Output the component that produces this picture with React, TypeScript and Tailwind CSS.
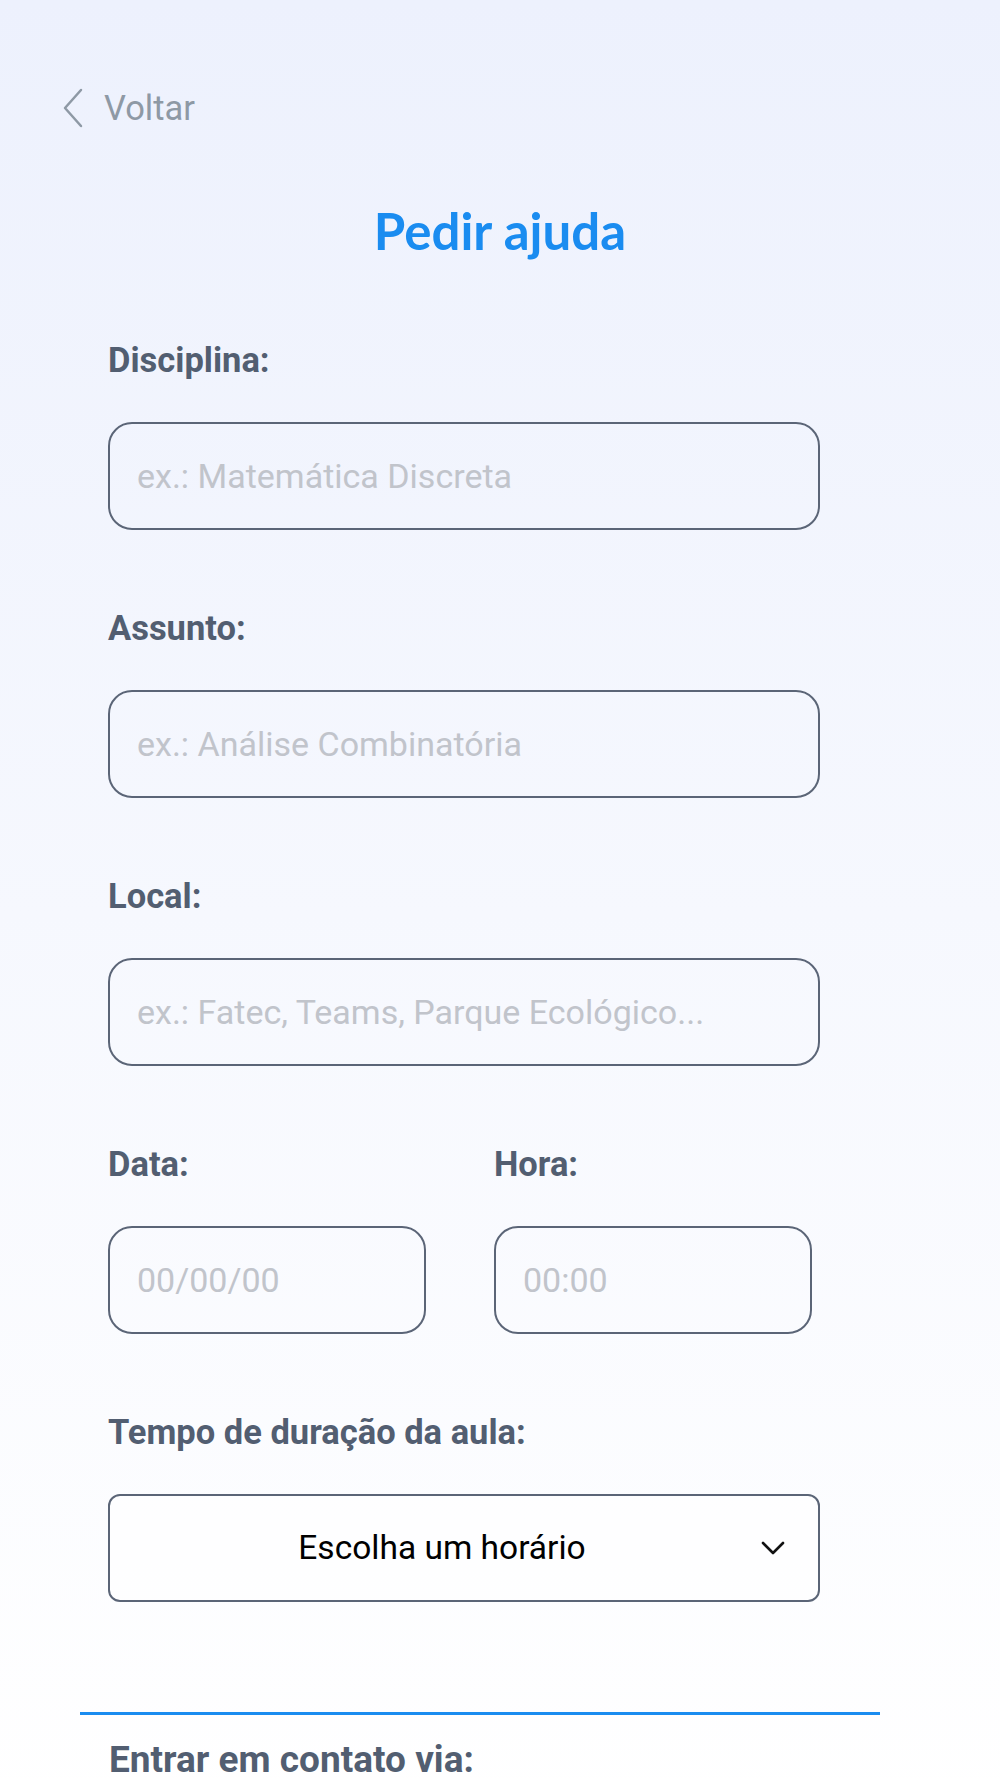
import React from "react";

const roboto = { fontFamily: "Roboto, 'Noto Sans', sans-serif" };

const Field = ({ label, placeholder, width = "w-[712px]" }: { label: string; placeholder: string; width?: string }) => (
  <div className="flex flex-col">
    <label className="text-[34.5px] leading-[40px] font-bold text-[#525e71]">{label}</label>
    <input
      placeholder={placeholder}
      className={`${width} mt-[42px] h-[108px] rounded-[24px] border-2 border-[#5b6577] bg-transparent px-[27px] text-[34px] text-[#333] placeholder:text-[#c1c4cb] outline-none`}
    />
  </div>
);

const App = () => {
  return (
    <div
      className="min-h-screen w-full bg-gradient-to-b from-[#edf1fd] via-[#f6f8fe] to-white pb-10"
      style={roboto}
    >
      <div className="pt-[88px] pl-[62px]">
        <button className="flex h-[40px] items-center gap-[20px] text-[#8e99a5]">
          <svg width="22" height="40" viewBox="0 0 22 40" fill="none">
            <path d="M19 2 L3 20 L19 38" stroke="#8e99a5" strokeWidth="2.5" strokeLinecap="round" strokeLinejoin="round" />
          </svg>
          <span className="text-[34.5px] leading-[40px]">Voltar</span>
        </button>
      </div>

      <h1
        className="mt-[73px] text-center text-[51px] leading-[60px] font-bold text-[#1a8cf0]"
        style={{ fontFamily: "Lato, 'Noto Sans', sans-serif" }}
      >
        Pedir ajuda
      </h1>

      <form className="mt-[79px] flex flex-col gap-[78px] pl-[108px]">
        <Field label="Disciplina:" placeholder="ex.: Matemática Discreta" />
        <Field label="Assunto:" placeholder="ex.: Análise Combinatória" />
        <Field label="Local:" placeholder="ex.: Fatec, Teams, Parque Ecológico..." />

        <div className="flex gap-[68px]">
          <Field label="Data:" placeholder="00/00/00" width="w-[318px]" />
          <Field label="Hora:" placeholder="00:00" width="w-[318px]" />
        </div>

        <div className="flex flex-col">
          <label className="text-[34.5px] leading-[40px] font-bold text-[#525e71]">Tempo de duração da aula:</label>
          <button
            type="button"
            className="relative mt-[42px] flex h-[108px] w-[712px] items-center rounded-[12px] border-2 border-[#5b6577] bg-white/60"
          >
            <span className="w-full pr-[44px] text-center text-[33.5px] text-black">Escolha um horário</span>
            <svg
              className="absolute right-[33px] top-1/2 -translate-y-1/2"
              width="24"
              height="14"
              viewBox="0 0 24 14"
              fill="none"
            >
              <path d="M2 2 L12 12 L22 2" stroke="#111" strokeWidth="2.6" strokeLinecap="round" strokeLinejoin="round" />
            </svg>
          </button>
        </div>
      </form>

      <div className="mt-[110px] ml-[80px] h-[3px] w-[800px] bg-[#1a8cf0]" />

      <h2 className="mt-[23px] pl-[109px] text-[37px] leading-[44px] font-bold text-[#525e71]">Entrar em contato via:</h2>
    </div>
  );
};

export default App;
